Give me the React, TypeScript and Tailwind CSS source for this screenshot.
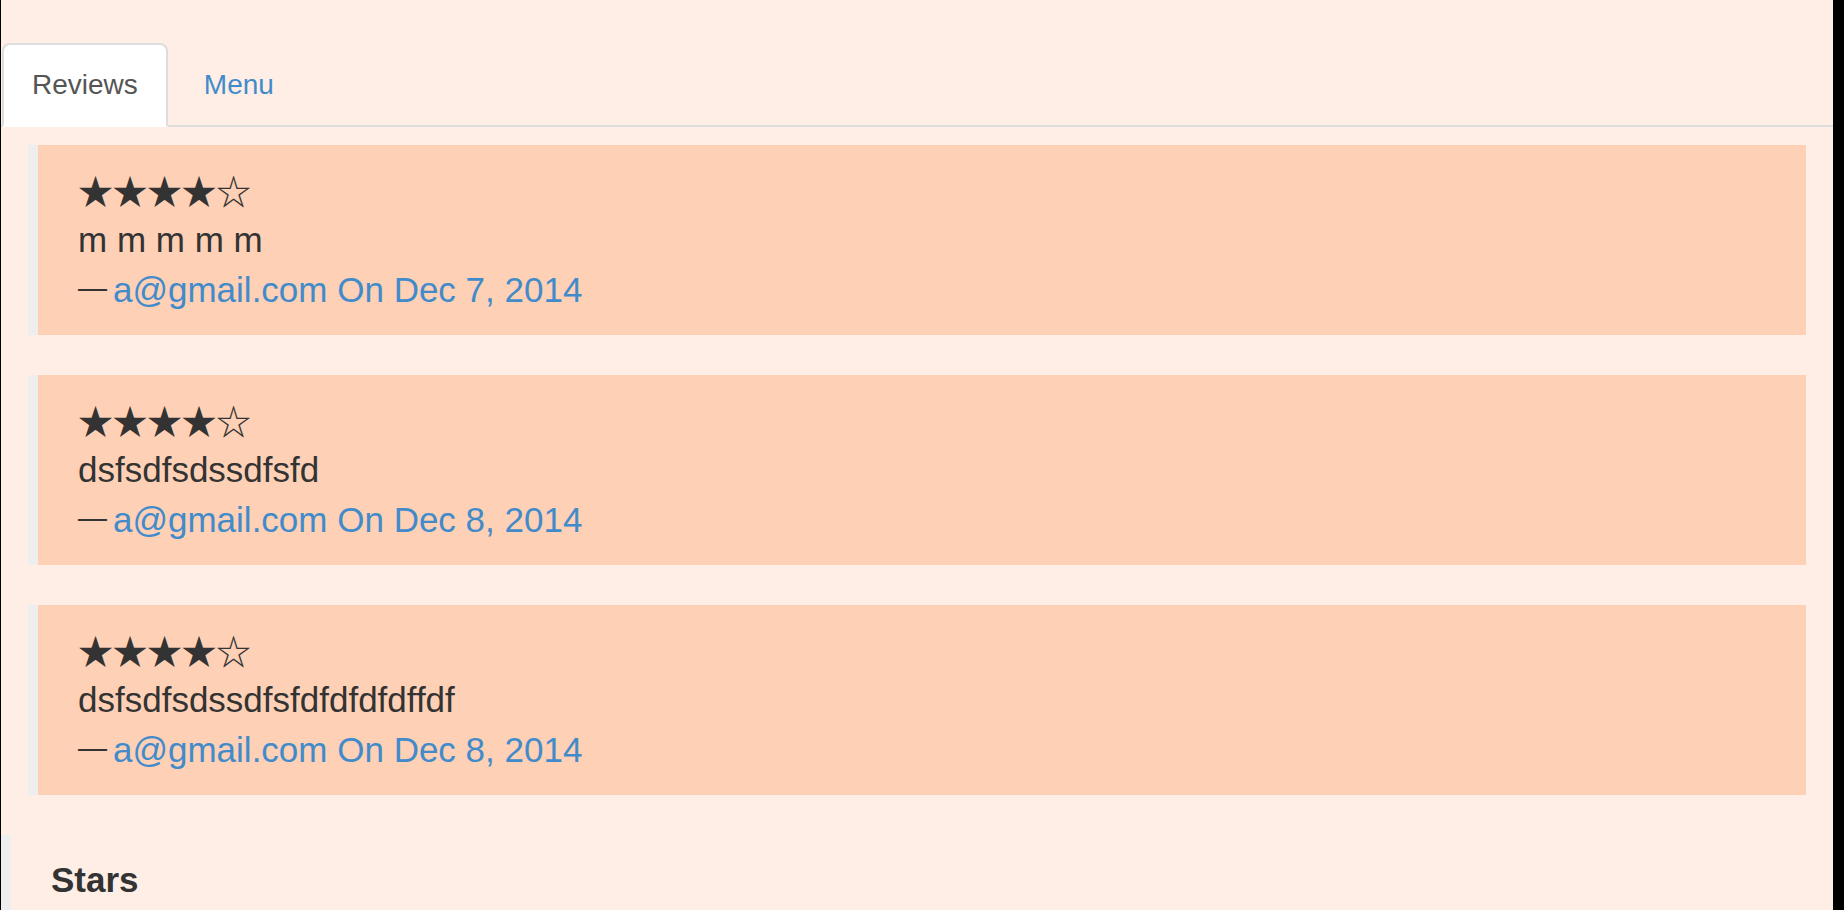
import React from 'react';

type Review = {
  rating: number;
  text: string;
  author: string;
  date: string;
};

const reviews: Review[] = [
  { rating: 4, text: 'm m m m m', author: 'a@gmail.com', date: 'Dec 7, 2014' },
  { rating: 4, text: 'dsfsdfsdssdfsfd', author: 'a@gmail.com', date: 'Dec 8, 2014' },
  { rating: 4, text: 'dsfsdfsdssdfsfdfdfdfdffdf', author: 'a@gmail.com', date: 'Dec 8, 2014' },
];

function Stars({ value }: { value: number }) {
  const stars = '★★★★★'.slice(0, value) + '☆☆☆☆☆'.slice(0, 5 - value);
  return (
    <p className="h-[50px] overflow-hidden whitespace-nowrap text-[35px] leading-[50px] tracking-[-0.5px] text-[#333] font-['Noto_Sans_CJK_JP','DejaVu_Sans',sans-serif]">
      {stars}
    </p>
  );
}

function ReviewCard({ review }: { review: Review }) {
  return (
    <blockquote className="mb-[40px] border-l-[10px] border-[#eeeeee] bg-[#fed0b6] px-[40px] py-[20px] text-[35px] leading-[50px] text-[#333]">
      <Stars value={review.rating} />
      <p className="h-[50px]">{review.text}</p>
      <footer className="h-[50px] leading-[50px]">
        <span className="mr-[6px] align-[4px] text-[29px] leading-none text-[#333]">—</span>
        <a href="#" className="text-[#428bca]">
          {review.author} On {review.date}
        </a>
      </footer>
    </blockquote>
  );
}

export default function App() {
  const [tab, setTab] = React.useState('Reviews');
  const tabs = ['Reviews', 'Menu'];

  return (
    <div className="flex min-h-screen bg-[#ffeee5] font-['Liberation_Sans',Arial,sans-serif]">
      <div className="w-px shrink-0 bg-black" />
      <div className="flex-1 min-w-0">
        <ul className="mt-[43px] flex border-b-2 border-[#dddddd] pl-px">
          {tabs.map((name) => (
            <li key={name} className="-mb-[2px] mr-[6px]">
              <a
                href="#"
                onClick={(e) => {
                  e.preventDefault();
                  setTab(name);
                }}
                className={`block rounded-t-[8px] border-2 px-[28px] py-[20px] text-[28px] leading-[40px] ${
                  tab === name
                    ? 'border-[#dddddd] border-b-transparent bg-white text-[#555]'
                    : 'border-transparent text-[#428bca]'
                }`}
              >
                {name}
              </a>
            </li>
          ))}
        </ul>

        <div className="pt-[18px]">
          <div className="px-[27px]">
            {reviews.map((r, i) => (
              <ReviewCard key={i} review={r} />
            ))}
          </div>

          <blockquote className="border-l-[10px] border-[#eeeeee] pl-[40px] pt-[20px] pb-[20px]">
            <h4 className="text-[35px] font-bold leading-[50px] text-[#333]">Stars</h4>
          </blockquote>
        </div>
      </div>
      <div className="w-[11px] shrink-0 bg-black" />
    </div>
  );
}
